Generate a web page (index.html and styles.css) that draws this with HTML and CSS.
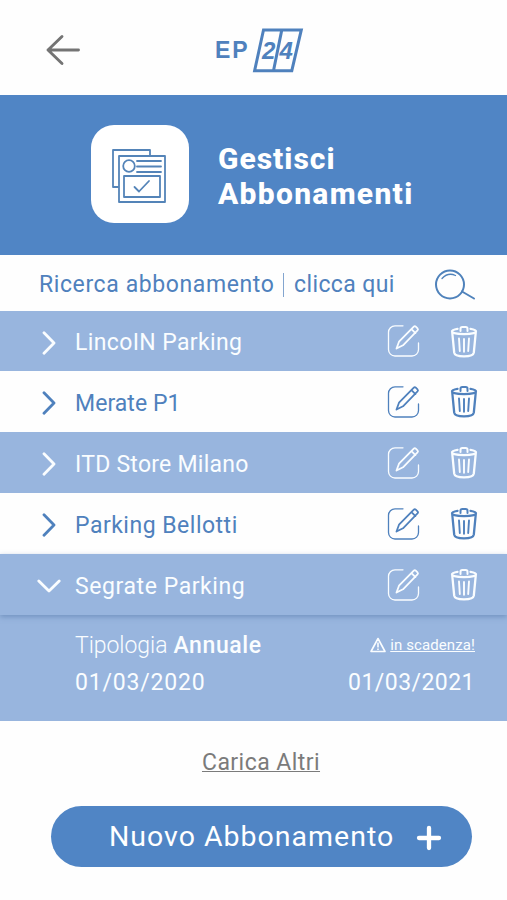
FILE: index.html
```html
<!DOCTYPE html>
<html lang="it">
<head>
<meta charset="utf-8">
<title>Gestisci Abbonamenti</title>
<link rel="stylesheet" href="styles.css">
</head>
<body>
<svg class="defs" width="0" height="0" aria-hidden="true">
  <symbol id="edit" viewBox="0 0 36 36" fill="none" stroke="currentColor" stroke-linecap="round" stroke-linejoin="round">
    <path stroke-width="1.300" d="M17 2.800H9a6.500 6.500 0 0 0-6.500 6.500v17.200a6.500 6.500 0 0 0 6.500 6.500h17a6.500 6.500 0 0 0 6.500-6.500V20"/>
    <path stroke-width="1.800" d="M10.500 25.500L13 18.700L27.800 3.700q1-1 2 0l1.700 1.700q1 1 0 2L17 22.300zM25.500 6.200l3.900 3.900"/>
  </symbol>
  <symbol id="trash" viewBox="0 0 30 36" fill="none" stroke="currentColor" stroke-linecap="round" stroke-linejoin="round">
    <path stroke-width="2.300" d="M8.500 4.800C5 5.400 3 6.200 3 7.200c0 1.700 5.500 2.900 12 2.900s12-1.200 12-2.900c0-1-2-1.800-5.500-2.400M3.200 8l2 20.700C5.500 31 10 32.400 15 32.400s9.500-1.400 9.800-3.700L26.800 8"/>
    <path stroke-width="2" d="M11.500 7V4.800q0-1.700 1.700-1.700h3.600q1.700 0 1.700 1.700V7"/>
    <path stroke-width="1.900" d="M10 14.500l.8 12.500M15 15v12.800M20 14.500l-.8 12.500"/>
  </symbol>
  <symbol id="chevron" viewBox="0 0 24 24" fill="none" stroke="currentColor" stroke-width="2.800" stroke-linecap="round" stroke-linejoin="round">
    <path d="M7 1.800L17 12 7 22.200"/>
  </symbol>
</svg>
<header class="topbar">
  <svg class="back" viewBox="0 0 36 32" fill="none" stroke="#747474" stroke-width="2.900" stroke-linecap="round" stroke-linejoin="round"><path d="M17 2.500L3 16l14 13.500M3 16h30.500"/></svg>
  <div class="logo">
    <span class="logo-ep">EP</span>
    <svg class="logo-mark" viewBox="0 0 52 46">
      <g fill="none" stroke="#4f81bd" stroke-width="3"><path d="M11.500 2.900H49.300L39.800 43.700H2.600zM29.800 2.900L21.500 43.700"/></g>
      <g fill="#4f81bd" class="logo-num"><text x="10" y="31.800">2</text><text x="27.500" y="31.800">4</text></g>
    </svg>
  </div>
</header>
<section class="hero">
  <div class="tile">
    <svg viewBox="0 0 56 56" fill="none" stroke="#5484b8" stroke-width="1.800" stroke-linejoin="round" stroke-linecap="round">
      <path d="M7 39H2V2h37v6"/><path d="M8 8h46v46H8z"/><circle cx="18" cy="18" r="5.800"/>
      <path d="M26 13h24M26 18.500h24M26 24h24M13 28h36v21H13zM23.500 39l4.500 4.500L38 33"/>
    </svg>
  </div>
  <h1 class="title"><span class="t1">Gestisci</span><span class="t2">Abbonamenti</span></h1>
</section>
<div class="search">
  <span class="s1">Ricerca abbonamento</span><span class="bar"></span><span class="s2">clicca qui</span>
  <svg class="lens" viewBox="0 0 42 32" fill="none" stroke="#4f82bb" stroke-linecap="round"><circle cx="16" cy="15.500" r="14" stroke-width="2"/><path stroke-width="2" d="M28 22.500L40 29.500"/><path stroke-width="1.300" d="M8 9.500q6-6.500 13.500-3"/></svg>
</div>
<ul class="list">
  <li class="row tint"><svg class="chev"><use href="#chevron"/></svg><span class="name n1">LincoIN Parking</span><svg class="edit"><use href="#edit"/></svg><svg class="trash"><use href="#trash"/></svg></li>
  <li class="row"><svg class="chev"><use href="#chevron"/></svg><span class="name n2">Merate P1</span><svg class="edit"><use href="#edit"/></svg><svg class="trash"><use href="#trash"/></svg></li>
  <li class="row tint"><svg class="chev"><use href="#chevron"/></svg><span class="name n3">ITD Store Milano</span><svg class="edit"><use href="#edit"/></svg><svg class="trash"><use href="#trash"/></svg></li>
  <li class="row"><svg class="chev"><use href="#chevron"/></svg><span class="name n4">Parking Bellotti</span><svg class="edit"><use href="#edit"/></svg><svg class="trash"><use href="#trash"/></svg></li>
  <li class="row tint open"><svg class="chev"><use href="#chevron"/></svg><span class="name n5">Segrate Parking</span><svg class="edit"><use href="#edit"/></svg><svg class="trash"><use href="#trash"/></svg></li>
</ul>
<section class="detail">
  <div class="line"><span class="type"><span class="light">Tipologia</span><span class="kind">Annuale</span></span>
    <span class="warn"><svg viewBox="0 0 16 16" fill="none" stroke="currentColor" stroke-width="1.600" stroke-linejoin="round"><path d="M8 1.500L15 14.500H1zM8 5.500v5M8 11.500v1.500"/></svg><a class="expiry">in scadenza!</a></span></div>
  <div class="line"><span class="date">01/03/2020</span><span class="date end">01/03/2021</span></div>
</section>
<a class="more">Carica Altri</a>
<button class="new"><span>Nuovo Abbonamento</span><svg viewBox="0 0 26 26" fill="none" stroke="currentColor" stroke-width="4.300" stroke-linecap="round"><path d="M13 3v20M3 13h20"/></svg></button>
</body>
</html>
```

FILE: styles.css
```css
* { box-sizing: border-box; }
body { margin: 0; width: 507px; height: 900px; overflow: hidden; background: #fefefe; font-family: Roboto, "Liberation Sans", sans-serif; font-size: 23px; color: #4f81bd; display: flex; flex-direction: column; }
.defs { position: absolute; }
span, a { white-space: nowrap; }
.topbar { height: 95px; flex: none; display: flex; align-items: center; padding: 5px 0 0 45px; }
.back { width: 36px; height: 32px; }
.logo { display: flex; align-items: center; margin-left: 134px; }
.logo-ep { font: bold 23px "Liberation Sans", sans-serif; letter-spacing: 2px; width: 37px; padding-top: 1px; }
.logo-mark { width: 52px; height: 46px; }
.logo-num { font: italic bold 24px "Liberation Sans", sans-serif; }
.hero { height: 160px; flex: none; background: #5085c5; color: #fff; display: flex; align-items: center; padding: 0 0 3px 91px; }
.tile { width: 98px; height: 98px; border-radius: 23px; background: #fff; display: flex; padding: 23px 0 0 20px; }
.tile svg { width: 56px; height: 56px; }
.title { margin: 4px 0 0 29px; font-size: 30px; line-height: 35px; font-weight: 800; display: flex; flex-direction: column; }
.t1 { letter-spacing: 1px; }
.t2 { letter-spacing: 1.300px; }
.search { height: 56px; flex: none; display: flex; align-items: center; padding: 3px 0 0 39px; }
.s1 { width: 243px; letter-spacing: 0.600px; }
.bar { width: 1px; height: 24px; background: #83a5cf; margin: 0 10px 0 1px; }
.s2 { width: 140px; letter-spacing: 0.400px; }
.lens { width: 42px; height: 32px; }
.list { list-style: none; margin: 0; padding: 0; flex: none; }
.row { height: 61px; display: flex; align-items: center; padding: 1px 0 0 37px; }
.row:first-child { height: 60px; }
.row.tint { background: #98b5de; color: #fafdff; }
.chev { width: 24px; height: 24px; margin-top: 2px; }
.open .chev { transform: rotate(90deg); }
.name { width: 311px; padding: 2px 0 0 14px; }
.n1 { letter-spacing: 0.370px; }
.n2 { letter-spacing: 0.050px; }
.n3 { letter-spacing: 0.250px; }
.n4 { letter-spacing: 0.500px; }
.n5 { letter-spacing: 0.580px; }
.edit { width: 36px; height: 36px; margin: 0 0 1px 14px; }
.trash { width: 30px; height: 36px; margin-left: 27px; }
.open { position: relative; box-shadow: 0 2px 5px #567aaa90; }
.detail { height: 106px; flex: none; background: #98b5de; color: #fafdff; padding: 12px 32px 0 75px; }
.line { height: 36px; display: flex; align-items: center; justify-content: space-between; }
.line + .line { padding-top: 2px; }
.light { font-weight: 300; letter-spacing: -0.050px; margin-right: 6px; }
.kind { font-weight: 500; letter-spacing: 0.600px; }
.warn { display: flex; align-items: center; gap: 4px; }
.warn svg { width: 16px; height: 16px; }
.expiry { font-size: 15px; text-decoration: underline; letter-spacing: 0.100px; }
.date { letter-spacing: 0.800px; }
.end { letter-spacing: 0.450px; }
.more { align-self: center; margin: 28px 0 0 15px; line-height: 27px; color: #7b7b7b; text-decoration: underline; text-decoration-thickness: 1px; letter-spacing: 0.450px; }
.new { margin: 30px 0 0 51px; width: 421px; height: 61px; flex: none; border: 0; border-radius: 31px; background: #5085c5; color: #fff; font: 28.500px Roboto, sans-serif; display: flex; align-items: center; padding: 0 0 0 58px; }
.new span { width: 307px; text-align: left; letter-spacing: 1px; }
.new svg { width: 26px; height: 26px; margin-top: 3px; }
```
